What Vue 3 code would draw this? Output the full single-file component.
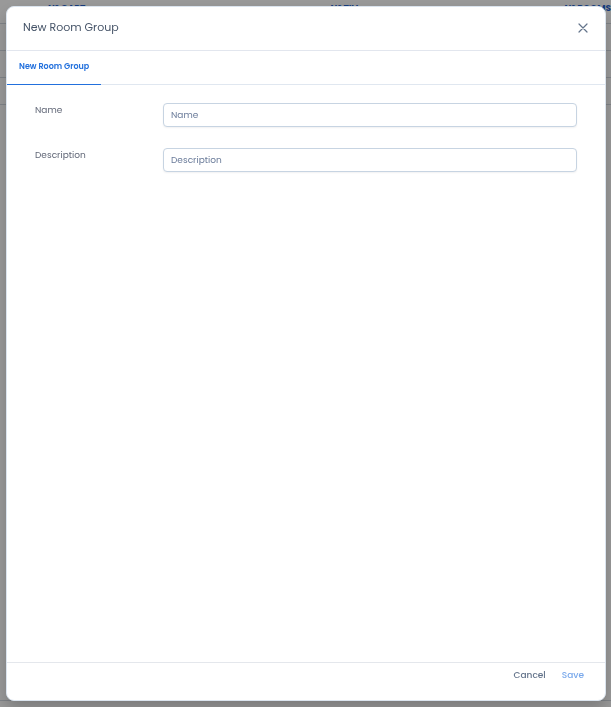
<template>
  <div class="page">
    <table class="rooms-table" aria-hidden="true">
      <thead>
        <tr>
          <th v-for="label in columns" :key="label">{{ label }}</th>
        </tr>
      </thead>
      <tbody>
        <tr v-for="row in 3" :key="row">
          <td v-for="label in columns" :key="label"></td>
        </tr>
      </tbody>
    </table>
    <div class="page-footer"></div>

    <div class="overlay">
      <form class="modal" role="dialog" aria-labelledby="modal-title" @submit.prevent>
        <header class="modal-header">
          <h1 id="modal-title">New Room Group</h1>
          <button type="button" class="close" aria-label="Close">
            <svg viewBox="0 0 10 10" fill="none" stroke="currentColor" stroke-width="1.2" stroke-linecap="round">
              <path d="M1 1l8 8M9 1L1 9" />
            </svg>
          </button>
        </header>

        <nav class="tabs">
          <button type="button" class="tab">New Room Group</button>
        </nav>

        <div class="modal-body">
          <div class="field">
            <label for="group-name">Name</label>
            <input id="group-name" v-model="name" type="text" placeholder="Name" />
          </div>
          <div class="field">
            <label for="group-description">Description</label>
            <input id="group-description" v-model="description" type="text" placeholder="Description" />
          </div>
        </div>

        <footer class="modal-footer">
          <button type="button" class="cancel">Cancel</button>
          <button type="submit" class="save" :disabled="!name">Save</button>
        </footer>
      </form>
    </div>
  </div>
</template>

<script setup>
import { ref } from "vue"

const columns = ["Nº CAPT.", "Nº TIV.", "Nº ROOMS"]

const name = ref("")
const description = ref("")
</script>

<style>
body {
  margin: 0;
}
</style>

<style scoped>
.page {
  height: 100vh;
  overflow: hidden;
  display: flex;
  flex-direction: column;
  justify-content: space-between;
  background: #fff;
  font-family: Poppins, Inter, "Open Sans", sans-serif;
  font-size: 9px;
  line-height: 16px;
  color: #64748b;
}

.rooms-table {
  width: 100%;
  table-layout: fixed;
  border-collapse: collapse;
}

.rooms-table th {
  height: 23px;
  box-sizing: border-box;
  padding: 0 0 6px;
  border-bottom: 1px solid #d5dbe3;
  font-size: 9px;
  font-weight: 700;
  text-align: right;
  white-space: nowrap;
  color: #2563cf;
}

.rooms-table th:first-child {
  width: 18%;
  padding-left: 48px;
  text-align: left;
}

.rooms-table th:last-child {
  width: 41%;
}

.rooms-table td {
  height: 26px;
  padding: 0;
  border-bottom: 1px solid #d5dbe3;
}

.page-footer {
  height: 6px;
  border-top: 1px solid #d5dbe3;
}

.overlay {
  position: fixed;
  inset: 0;
  box-sizing: border-box;
  display: flex;
  padding: 6px 5px 6px 6px;
  background: rgba(0, 0, 0, 0.4);
}

.modal {
  flex: 1;
  min-width: 0;
  display: flex;
  flex-direction: column;
  border: 1px solid #dbe4ee;
  border-radius: 8px;
  background: #fff;
  box-shadow: 0 8px 16px rgba(0, 0, 0, 0.2);
}

.modal-header {
  height: 41px;
  flex: none;
  display: flex;
  align-items: center;
  justify-content: space-between;
  padding: 0 16px 2px;
  border-bottom: 1px solid #e2e6ee;
}

h1 {
  margin: 0;
  padding-bottom: 2px;
  font-size: 11px;
  font-weight: 400;
  color: #475569;
}

button {
  padding: 0;
  border: none;
  background: none;
  font: inherit;
  cursor: pointer;
}

.close {
  display: flex;
  padding: 1px;
  color: #64748b;
}

.close svg {
  width: 10px;
  height: 10px;
}

.tabs {
  height: 33px;
  flex: none;
  display: flex;
  border-bottom: 1px solid #e0e7f0;
}

.tab {
  margin-bottom: -1px;
  padding: 0 12px 1px;
  border-bottom: 1px solid #2270dd;
  font-size: 8px;
  font-weight: 600;
  color: #2270dd;
}

.modal-body {
  flex: 1;
  display: flex;
  flex-direction: column;
  gap: 21px;
  padding: 18px 28px;
}

.field {
  display: flex;
  align-items: flex-start;
}

.field label {
  width: 128px;
  flex: none;
  line-height: 14px;
  color: #626878;
}

.field input {
  flex: 1;
  min-width: 0;
  height: 24px;
  box-sizing: border-box;
  padding: 0 7px;
  border: 1px solid #c7d4e2;
  border-radius: 4px;
  background: #fff;
  box-shadow: 0 1px 2px rgba(15, 23, 42, 0.06);
  font: inherit;
  color: #475569;
}

.field input::placeholder {
  color: #6b7c9a;
  opacity: 1;
}

.modal-footer {
  height: 38px;
  flex: none;
  box-sizing: border-box;
  display: flex;
  align-items: flex-start;
  justify-content: flex-end;
  gap: 16px;
  padding: 4px 21px 0;
  border-top: 1px solid #e4e7ec;
  font-weight: 500;
}

.cancel {
  color: #64748b;
}

.save {
  color: #7aa9eb;
}
</style>
